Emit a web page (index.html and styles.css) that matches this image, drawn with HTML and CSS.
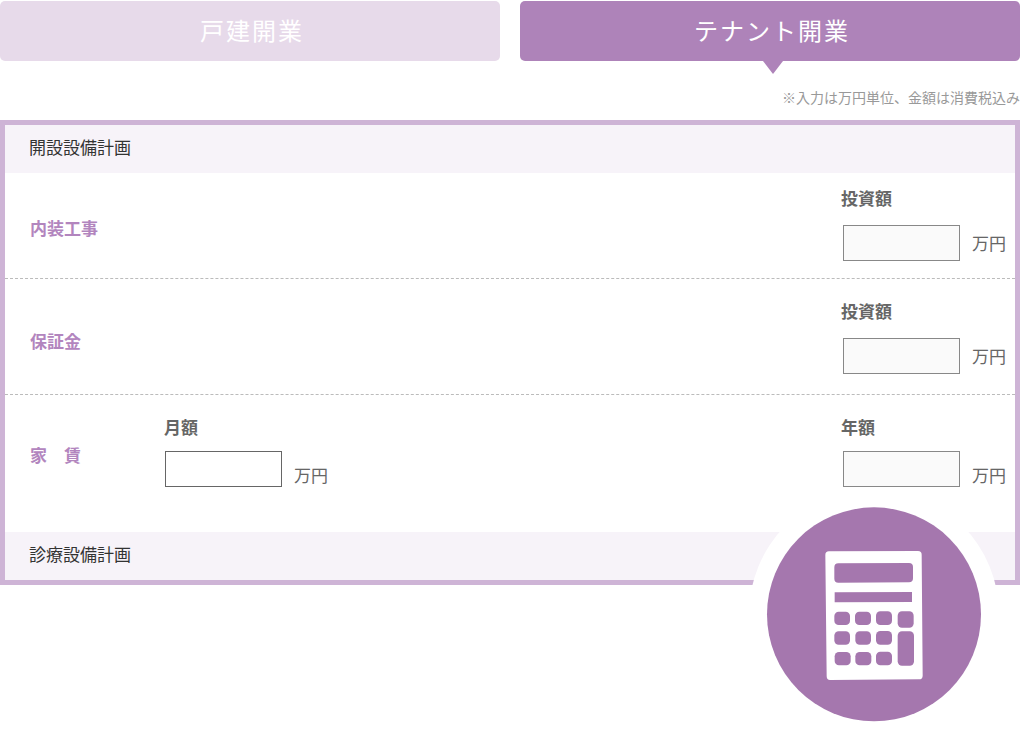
FILE: index.html
```html
<!DOCTYPE html>
<html lang="ja">

<head>
    <meta charset="utf-8">
    <meta name="viewport" content="width=device-width, initial-scale=1.0">
    <title>開業シミュレーション</title>
    <link rel="stylesheet" href="styles.css">
</head>

<body>
    <div class="tabs">
        <button type="button" class="tab">戸建開業</button>
        <button type="button" class="tab active">テナント開業</button>
    </div>
    <p class="note">※入力は万円単位、金額は消費税込み</p>
    <form class="plan">
        <div class="panel">
            <h2 class="section-title">開設設備計画</h2>
            <div class="row first">
                <div class="name">内装工事</div>
                <div class="field total">
                    <label for="interior">投資額</label>
                    <div class="control">
                        <input type="text" id="interior" readonly>
                        <span class="unit">万円</span>
                    </div>
                </div>
            </div>
            <div class="row">
                <div class="name">保証金</div>
                <div class="field total">
                    <label for="deposit">投資額</label>
                    <div class="control">
                        <input type="text" id="deposit" readonly>
                        <span class="unit">万円</span>
                    </div>
                </div>
            </div>
            <div class="row rent">
                <div class="name">家　賃</div>
                <div class="field">
                    <label for="rentMonth">月額</label>
                    <div class="control">
                        <input type="text" id="rentMonth">
                        <span class="unit">万円</span>
                    </div>
                </div>
                <div class="field total">
                    <label for="rentYear">年額</label>
                    <div class="control">
                        <input type="text" id="rentYear" readonly>
                        <span class="unit">万円</span>
                    </div>
                </div>
            </div>
            <h2 class="section-title">診療設備計画</h2>
        </div>
        <!-- 電卓アイコン -->
        <svg class="calculator" viewBox="0 0 750 750" aria-hidden="true">
            <circle cx="375" cy="375" r="375" fill="#fff" />
            <circle cx="375" cy="376" r="321" fill="#a577ae" />
            <path fill="#fff" d="M240 187l267-1q11 0 11 11l3 363q0 11-11 11l-267 2q-10 0-10-11l-4-364q0-11 11-11z" />
            <g fill="#a577ae">
                <path d="M268 223l212-1q12 0 12 12v34q0 12-12 12l-212 1q-12 0-12-12v-34q0-12 12-12z" />
                <path d="M257 310l232-1v30l-232 1z" />
                <rect x="256" y="368" width="47" height="40" rx="13" />
                <rect x="318" y="368" width="48" height="40" rx="13" />
                <rect x="381" y="367" width="48" height="41" rx="13" />
                <rect x="446" y="367" width="48" height="49" rx="13" />
                <rect x="256" y="427" width="47" height="40" rx="13" />
                <rect x="319" y="427" width="47" height="40" rx="13" />
                <rect x="381" y="426" width="48" height="41" rx="13" />
                <rect x="446" y="427" width="49" height="103" rx="13" />
                <rect x="257" y="489" width="48" height="40" rx="13" />
                <rect x="319" y="489" width="48" height="40" rx="13" />
                <rect x="381" y="488" width="48" height="41" rx="13" />
            </g>
        </svg>
    </form>
</body>

</html>
```
FILE: styles.css
```css
* {
    box-sizing: border-box;
}

body {
    margin: 0;
    /* 電卓アイコンがはみ出す分の余白 */
    padding-bottom: 155px;
    background-color: #fff;
    color: #666;
    font-family: "Noto Sans CJK JP", sans-serif;
    font-size: 17px;
    line-height: 24px;
}

.tabs {
    display: flex;
    gap: 20px;
    padding-top: 1px;
}

.tab {
    position: relative;
    flex: 1;
    height: 60px;
    padding: 0 0 4px 4px;
    border: none;
    border-radius: 5px;
    background-color: #e7daea;
    color: #fff;
    font-family: inherit;
    font-size: 24px;
    letter-spacing: 2px;
    cursor: pointer;
}

.tab.active {
    background-color: #ae83b9;
}

/* 選択中タブの下の三角 */
.tab.active::after {
    content: "";
    position: absolute;
    top: 100%;
    left: calc(50% - 7px);
    border: 10px solid transparent;
    border-top: 13px solid #ae83b9;
    border-bottom: none;
}

.note {
    margin: 24px 0 11px;
    color: #999;
    font-size: 14px;
    text-align: right;
}

.plan {
    position: relative;
}

.panel {
    border: 5px solid #ceb4d6;
}

.section-title {
    margin: 0;
    padding: 10px 24px 14px;
    background-color: #f7f3f9;
    color: #333;
    font-size: 17px;
    font-weight: normal;
}

.row {
    display: flex;
    align-items: center;
    padding: 20px 9px 20px 25px;
    border-bottom: 1px dashed #bbb;
}

.row.first {
    padding-top: 13px;
    padding-bottom: 17px;
}

.row.rent {
    padding-bottom: 45px;
    border-bottom: none;
}

.name {
    width: 134px;
    padding-top: 8px;
    color: #b285be;
    font-weight: bold;
}

.field {
    display: flex;
    flex-direction: column;
    gap: 15px;
}

.field.total {
    margin-left: auto;
}

.field label {
    font-weight: bold;
}

.control {
    display: flex;
    align-items: center;
    gap: 12px;
    padding-left: 1px;
}

.total .control {
    padding-left: 2px;
}

.rent .field {
    gap: 12px;
}

.rent .control {
    align-items: flex-end;
}

.control input {
    width: 117px;
    height: 36px;
    padding: 0 8px;
    border: 1px solid #666;
    border-radius: 0;
    background-color: #fff;
    color: #666;
    font-family: inherit;
    font-size: 17px;
    text-align: right;
}

.control input[readonly] {
    border-color: #888;
    background-color: #fafafa;
}

.calculator {
    position: absolute;
    right: 21px;
    bottom: -154px;
    width: 250px;
    height: 250px;
}
```
